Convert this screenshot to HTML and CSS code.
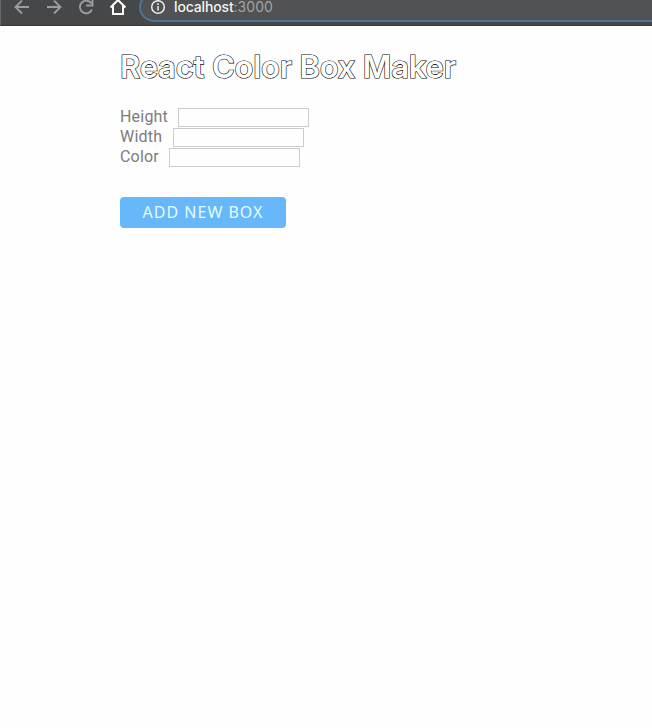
FILE: index.html
```html
<!DOCTYPE html>
<html lang="en">
<head>
<meta charset="utf-8">
<title>React Color Box Maker</title>
<link rel="stylesheet" href="styles.css">
</head>
<body>
<header class="toolbar">
  <svg class="nav" width="138" height="25" viewBox="0 0 138 25" fill="none" stroke="#9b9d9e" stroke-width="1.9">
    <path d="M29 7H16M22 .5 15.500 7 22 13.500"/>
    <path d="M47 7H60M54 .5 60.500 7 54 13.500"/>
    <path d="M91.500 3.500A6.300 6.300 0 1 0 92 9.500M92.500 -1V5.500H86"/>
    <path stroke="#fff" stroke-width="2" d="M110.500 7.500 118 0 125.500 7.500M113 6V14H123V6"/>
  </svg>
  <div class="address">
    <svg class="info" width="16" height="16" viewBox="0 0 16 16" fill="none" stroke="#eee" stroke-width="1.5">
      <circle cx="8" cy="8" r="6.300"/>
      <path d="M8 7V11.500M8 4.300V5.900"/>
    </svg>
    <span class="host">localhost</span><span class="port">:3000</span>
  </div>
</header>
<main class="page">
  <h1 class="title">React Color Box Maker</h1>
  <form class="form">
    <div class="row"><label class="label height" for="height">Height</label><input class="field" id="height"></div>
    <div class="row"><label class="label width" for="width">Width</label><input class="field" id="width"></div>
    <div class="row"><label class="label color" for="color">Color</label><input class="field" id="color"></div>
    <button class="add" type="button">ADD NEW BOX</button>
  </form>
</main>
</body>
</html>
```
FILE: styles.css
```css
* { box-sizing: border-box; }
body { margin: 0; background: #fefefe; font-family: Inter, sans-serif; }
.toolbar {
  display: flex;
  height: 26px;
  overflow: hidden;
  background: #464749;
  border-bottom: 1px solid #3a3638;
  border-left: 1px solid #66686a;
}
.nav { flex: none; margin-left: -1px; }
.address {
  flex: none;
  display: flex;
  align-items: center;
  width: 560px;
  height: 30px;
  margin-top: -8px;
  margin-left: 1px;
  padding: 0 0 0 9px;
  border: 2px solid #4f7596;
  border-radius: 15px;
  background: #505253;
  font-size: 14px;
  line-height: 12px;
}
.info { margin-right: 8px; }
.host { color: #f4f4f4; font-weight: 500; letter-spacing: -.15px; }
.port { color: #a2a4a5; letter-spacing: .05px; }
.page { padding: 21px 0 0 120px; }
.title {
  margin: 0;
  height: 40px;
  line-height: 40px;
  font-size: 31px;
  font-weight: 600;
  letter-spacing: -.2px;
  white-space: nowrap;
  color: #fff;
  -webkit-text-stroke: 1.2px #000;
  paint-order: stroke fill;
}
.form { margin-top: 20px; }
.row { display: flex; height: 20px; gap: 10px; }
.label {
  font-family: Roboto, sans-serif;
  font-size: 16px;
  line-height: 20px;
  letter-spacing: .2px;
  color: #7c7c7c;
  white-space: nowrap;
}
.height { width: 48px; }
.width { width: 43px; }
.color { width: 39px; }
.field {
  width: 131px;
  height: 19px;
  margin: 1px 0 0;
  padding: 0 2px;
  border: 1px solid #ccc;
  background: #fefefe;
}
.add {
  display: block;
  width: 166px;
  height: 31px;
  margin-top: 30px;
  padding: 0 0 2px;
  border: 0;
  border-radius: 4px;
  background: #67b7fb;
  color: #e2fcff;
  font: 16px "Noto Sans", sans-serif;
  letter-spacing: 1px;
}
```
